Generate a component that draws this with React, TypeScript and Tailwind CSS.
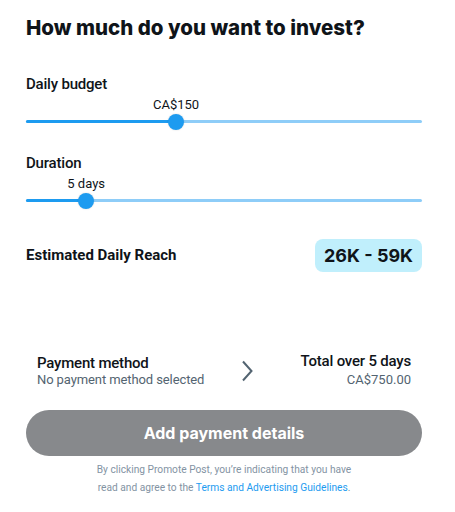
import React from "react";

function Slider({ pct, label }: { pct: number; label: string }) {
  return (
    <div className="relative h-[42px]">
      <div
        className="absolute top-0 -translate-x-1/2 text-[13px] leading-4 text-[#0f1419] whitespace-nowrap"
        style={{ left: `${pct}%` }}
      >
        {label}
      </div>
      <div className="absolute left-0 right-0 top-[23px] h-[3px] rounded-full bg-[#8ecdf8]" />
      <div
        className="absolute left-0 top-[23px] h-[3px] rounded-l-full bg-[#1d9bf0]"
        style={{ width: `${pct}%` }}
      />
      <div
        className="absolute top-[17px] h-4 w-4 -translate-x-1/2 rounded-full bg-[#1d9bf0] shadow-[0_0_2px_rgba(0,0,0,0.15)]"
        style={{ left: `${pct}%` }}
      />
    </div>
  );
}

export default function App() {
  return (
    <div
      className="w-[455px] h-[512px] bg-white text-[#0f1419] pl-[26px] pt-[16px]"
      style={{ fontFamily: "Roboto, 'Liberation Sans', sans-serif" }}
    >
      <div className="w-[396px] flex flex-col">
        <h1
          className="text-[20.5px] leading-6 font-extrabold"
          style={{ fontFamily: "Inter, 'Liberation Sans', sans-serif" }}
        >
          How much do you want to invest?
        </h1>

        <div className="mt-[34px] text-[15px] leading-5 font-medium tracking-[-0.2px]">Daily budget</div>
        <div className="mt-[3px]">
          <Slider pct={37.9} label="CA$150" />
        </div>

        <div className="mt-[14px] text-[15px] leading-5 font-medium tracking-[-0.2px]">Duration</div>
        <div className="mt-[3px]">
          <Slider pct={15.2} label="5 days" />
        </div>

        <div className="mt-[21px] flex items-center justify-between">
          <div className="text-[15px] font-bold">Estimated Daily Reach</div>
          <div
            className="h-[33px] w-[107px] rounded-[8px] bg-[#c0effc] flex items-center justify-center text-[18px] font-bold"
            style={{ fontFamily: "Inter, 'Liberation Sans', sans-serif" }}
          >
            26K - 59K
          </div>
        </div>

        <div className="mt-[80px] flex items-center px-[11px]">
          <div className="flex flex-col">
            <div className="text-[15px] leading-[18px] font-medium tracking-[-0.2px]">Payment method</div>
            <div className="text-[13px] leading-4 text-[#536471] tracking-[-0.1px] whitespace-nowrap">
              No payment method selected
            </div>
          </div>
          <svg width="12" height="22" viewBox="0 0 12 22" className="ml-[37px] text-[#536471]">
            <path d="M2 1.5 L10.5 11 L2 20.5" fill="none" stroke="currentColor" strokeWidth="2" />
          </svg>
          <div className="flex flex-col items-end ml-auto">
            <div className="text-[15px] leading-[18px] font-medium tracking-[-0.2px]">Total over 5 days</div>
            <div className="text-[13px] leading-5 text-[#536471]">CA$750.00</div>
          </div>
        </div>

        <button
          className="mt-[20px] h-[46px] w-full rounded-full bg-[#87898c] text-white text-[16px] font-bold"
          style={{ fontFamily: "Inter, 'Liberation Sans', sans-serif" }}
        >
          Add payment details
        </button>

        <div className="mt-[5px] text-center text-[10.2px] leading-[18px] text-[#8393a3]">
          By clicking Promote Post, you’re indicating that you have
          <br />
          read and agree to the <span className="text-[#1d9bf0]">Terms and Advertising Guidelines</span>.
        </div>
      </div>
    </div>
  );
}
